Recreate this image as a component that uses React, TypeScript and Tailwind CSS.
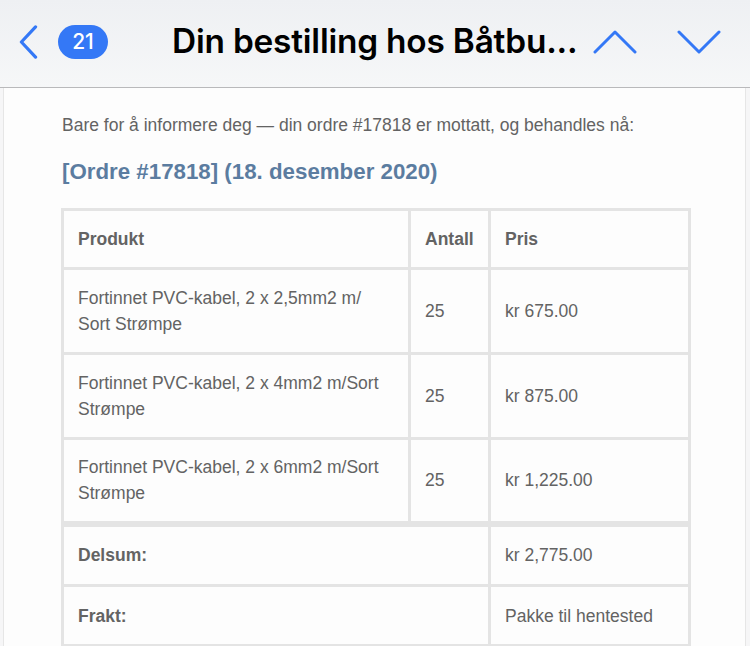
import React from "react";

const rows = [
  { name: "Fortinnet PVC-kabel, 2 x 2,5mm2 m/ Sort Strømpe", qty: "25", price: "kr 675.00" },
  { name: "Fortinnet PVC-kabel, 2 x 4mm2 m/Sort Strømpe", qty: "25", price: "kr 875.00" },
  { name: "Fortinnet PVC-kabel, 2 x 6mm2 m/Sort Strømpe", qty: "25", price: "kr 1,225.00" },
];

function Chevron({ d, className }: { d: string; className?: string }) {
  return (
    <svg viewBox="0 0 44 24" className={className} fill="none" stroke="#3478f6" strokeWidth={3} strokeLinecap="round" strokeLinejoin="round">
      <path d={d} />
    </svg>
  );
}

export default function App() {
  const cell = "border-[3px] border-[#e4e4e4] px-[14px] align-middle";
  return (
    <div className="h-[646px] w-[750px] overflow-hidden bg-[#f6f6f7] font-['Liberation_Sans',Arial,sans-serif]">
      {/* Nav bar */}
      <div className="flex h-[88px] items-center border-b border-[#b9b9bb] bg-gradient-to-b from-[#eef0f3] to-[#f6f7f8] pb-1 font-['Inter',sans-serif]">
        <svg viewBox="0 0 22 36" className="ml-[17px] h-[34px] w-[22px]" fill="none" stroke="#3478f6" strokeWidth={3.4} strokeLinecap="round" strokeLinejoin="round">
          <path d="M19 2 L4 18 L19 34" />
        </svg>
        <div className="ml-[19px] flex h-[34px] w-[50px] items-center justify-center rounded-full bg-[#3478f6] text-[21px] font-medium text-white">
          21
        </div>
        <div className="ml-[64px] text-[33.4px] font-semibold tracking-[-0.2px] text-black">
          Din bestilling hos Båtbu...
        </div>
        <Chevron d="M2 22 L22 2 L42 22" className="ml-[16px] h-[24px] w-[44px]" />
        <Chevron d="M2 2 L22 22 L42 2" className="ml-[40px] h-[24px] w-[44px]" />
      </div>

      {/* Mail body */}
      <div className="ml-[3px] h-full w-[743px] border-x border-[#e6e6e6] bg-[#fdfdfd] pl-[57px] pt-[25px] text-[#636363]">
        <p className="pl-px text-[17.5px] leading-[24px]">
          Bare for å informere deg — din ordre #17818 er mottatt, og behandles nå:
        </p>
        <h2 className="mt-[21px] pl-px text-[22.3px] font-bold leading-[28px] text-[#5b7ca0]">
          [Ordre #17818] (18. desember 2020)
        </h2>
        <table className="mt-[22px] w-[627px] table-fixed border-collapse text-left text-[17.5px] leading-[26px]">
          <colgroup>
            <col className="w-[347px]" />
            <col className="w-[80px]" />
            <col className="w-[200px]" />
          </colgroup>
          <thead>
            <tr className="h-[59px]">
              <th className={`${cell} font-bold`}>Produkt</th>
              <th className={`${cell} font-bold`}>Antall</th>
              <th className={`${cell} font-bold`}>Pris</th>
            </tr>
          </thead>
          <tbody>
            {rows.map((r) => (
              <tr key={r.name} className="h-[85px]">
                <td className={`${cell} pr-[20px]`}>{r.name}</td>
                <td className={cell}>{r.qty}</td>
                <td className={cell}>{r.price}</td>
              </tr>
            ))}
          </tbody>
          <tfoot>
            <tr className="h-[62px]">
              <th colSpan={2} className={`${cell} border-t-[6px] font-bold`}>
                Delsum:
              </th>
              <td className={`${cell} border-t-[6px]`}>kr 2,775.00</td>
            </tr>
            <tr className="h-[60px]">
              <th colSpan={2} className={`${cell} font-bold`}>
                Frakt:
              </th>
              <td className={cell}>Pakke til hentested</td>
            </tr>
            <tr className="h-[60px]">
              <th colSpan={2} className={cell} />
              <td className={cell} />
            </tr>
          </tfoot>
        </table>
      </div>
    </div>
  );
}
